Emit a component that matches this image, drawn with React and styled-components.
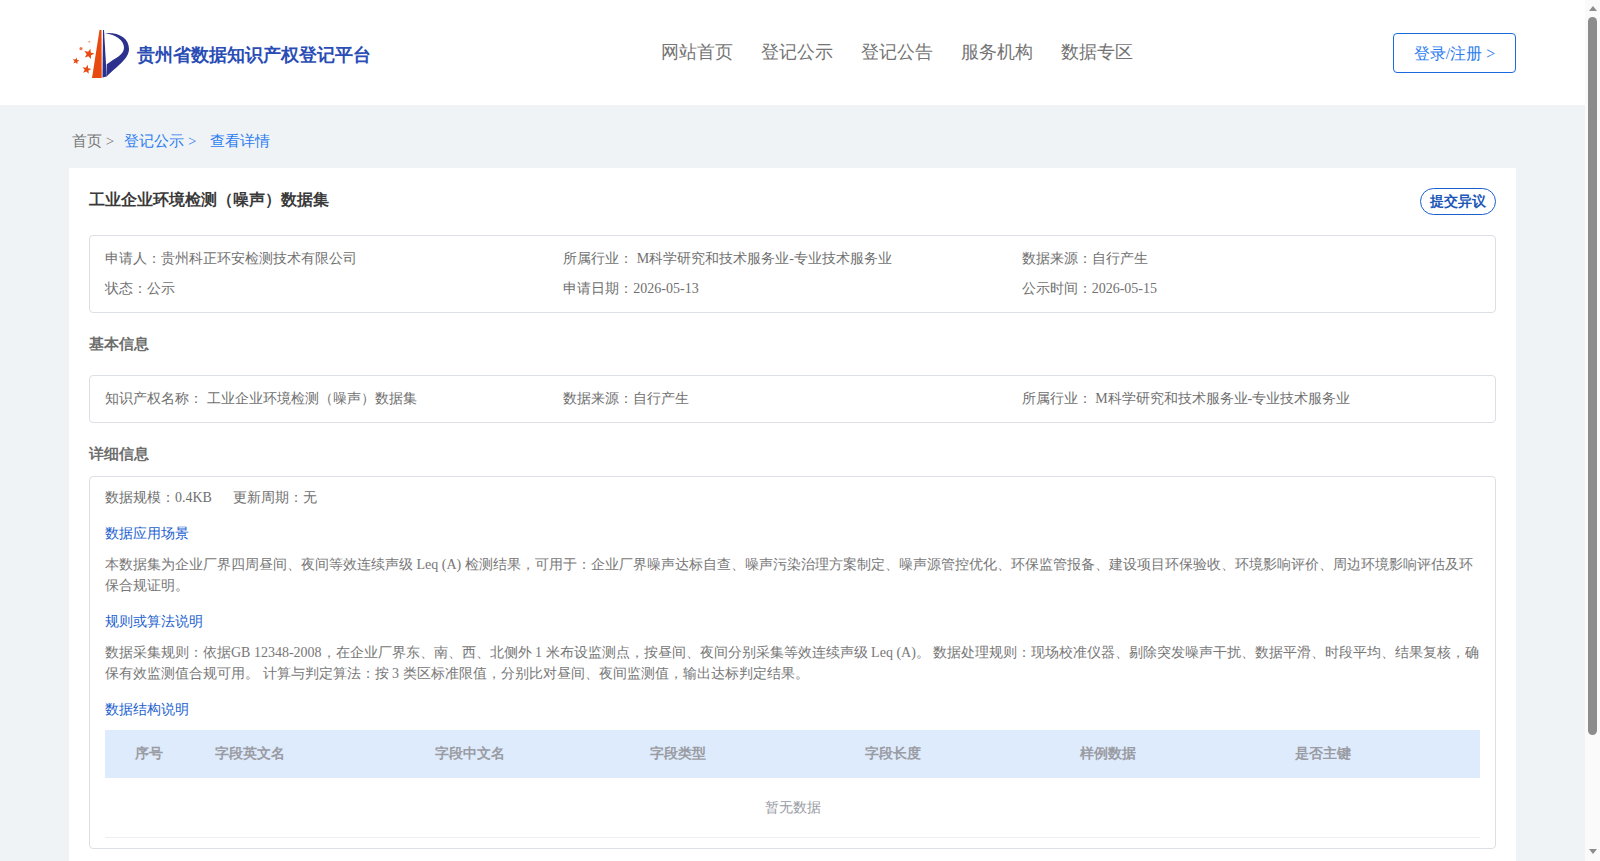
import React from "react";
import styled, { createGlobalStyle } from "styled-components";

const GlobalStyle = createGlobalStyle`
  html, body {
    margin: 0;
    padding: 0;
    background: #eff3f6;
    font-family: "Liberation Serif", serif;
  }
  body {
    padding-right: 15px;
  }
  * {
    box-sizing: border-box;
  }
`;

const Header = styled.header`
  height: 105px;
  background: #fff;
  display: flex;
  align-items: center;
  padding: 0 69px 0 70px;
`;

const Brand = styled.div`
  flex: 0 0 591px;
  display: flex;
  align-items: center;
  gap: 7px;
  padding-top: 2px;
`;

const BrandName = styled.span`
  color: #2a4db5;
  font-size: 18px;
  font-weight: 700;
  padding-top: 2px;
`;

const Nav = styled.nav`
  display: flex;
  gap: 28px;
  padding-bottom: 2px;
`;

const NavItem = styled.a`
  color: #747474;
  font-size: 18px;
`;

const LoginButton = styled.button`
  margin-left: auto;
  width: 123px;
  height: 40px;
  padding: 3px 0 0;
  background: #fff;
  border: 1px solid #1a6be0;
  border-radius: 4px;
  color: #2b7cf0;
  font-family: inherit;
  font-size: 16px;
`;

const Main = styled.main`
  padding: 0 69px;
  height: 888px;
`;

const Crumbs = styled.div`
  height: 63px;
  padding: 27px 3px 0;
  font-size: 15px;
  display: flex;
  gap: 10px;
`;

const Crumb = styled.span`
  color: ${(props) => (props.active ? "#2b7cf0" : "#777")};
  margin-right: ${(props) => props.gap || 0}px;
`;

const Card = styled.section`
  background: #fff;
  padding: 19px 20px;
  height: 825px;
`;

const TitleRow = styled.div`
  display: flex;
  justify-content: space-between;
  align-items: center;
  height: 27px;
  margin: 1px 0 20px;
`;

const Title = styled.h1`
  margin: 0 0 2px;
  font-size: 16px;
  font-weight: 700;
  color: #3a3a3a;
`;

const ObjectionButton = styled.button`
  width: 76px;
  height: 27px;
  padding: 0;
  background: #fff;
  border: 1px solid #1a5fd0;
  border-radius: 14px;
  color: #1d57b8;
  font-family: inherit;
  font-size: 14px;
  font-weight: 700;
`;

const Panel = styled.div`
  border: 1px solid #dcdfe6;
  border-radius: 4px;
  padding: ${(props) => props.pad || "8px 15px"};
  font-size: 14px;
  color: #707070;
`;

const InfoRow = styled.div`
  display: grid;
  grid-template-columns: repeat(3, 1fr);
  line-height: 30px;
  height: 30px;
`;

const SectionTitle = styled.h2`
  margin: 0;
  height: ${(props) => props.height}px;
  padding-top: 20px;
  font-size: 15px;
  line-height: 22px;
  font-weight: 700;
  color: #6e6e6e;
`;

const StatRow = styled.div`
  display: flex;
  gap: 21px;
  line-height: 21px;
`;

const SubTitle = styled.div`
  color: #1d5fd0;
  line-height: 21px;
  margin-top: 15px;
`;

const Paragraph = styled.p`
  margin: 10px 0 0;
  line-height: 21px;
  color: #777;
`;

const TableHead = styled.div`
  display: grid;
  grid-template-columns: 110px 220px repeat(4, 215px) 1fr;
  margin-top: 10px;
  height: 48px;
  align-items: center;
  background: #deebfc;
  color: #9a9ca3;
  font-weight: 700;
`;

const HeadCell = styled.div`
  padding-left: ${(props) => props.left || 0}px;
`;

const EmptyRow = styled.div`
  height: 60px;
  line-height: 60px;
  text-align: center;
  color: #9a9ca3;
  border-bottom: 1px solid #ebeef5;
`;

const Scrollbar = styled.div`
  position: fixed;
  top: 0;
  right: 0;
  bottom: 0;
  width: 15px;
  background: #fafafa;
  display: flex;
  flex-direction: column;
  align-items: center;
`;

const ScrollArrow = styled.div`
  width: 0;
  height: 0;
  margin: ${(props) => (props.down ? "auto 0 7px" : "6px 0 0")};
  border-left: 4.500px solid transparent;
  border-right: 4.500px solid transparent;
  border-top: ${(props) => (props.down ? "5px solid #8c8c8c" : "0")};
  border-bottom: ${(props) => (props.down ? "0" : "5px solid #8c8c8c")};
`;

const ScrollThumb = styled.div`
  width: 9px;
  height: 718px;
  margin-top: 6px;
  background: #8c8c8c;
  border-radius: 5px;
`;

const starPoints = (cx, cy, r, turn = 0) => {
  const points = [];
  for (let i = 0; i < 10; i++) {
    const radius = i % 2 === 0 ? r : r * 0.42;
    const angle = -Math.PI / 2 + turn + (i * Math.PI) / 5;
    points.push(`${(cx + radius * Math.cos(angle)).toFixed(2)},${(cy + radius * Math.sin(angle)).toFixed(2)}`);
  }
  return points.join(" ");
};

const Logo = () => (
  <svg width="60" height="50" viewBox="0 0 60 50">
    <polygon points="29.500,1 31.500,1 31.700,49 22,49" fill="#e8490f" />
    <polygon points="33,1 34,1 36.700,47.500 32.500,48.500" fill="#2b318c" />
    <path
      d="M35 4 C49 3 59 9 59 20 C59 30 46 38 36.700 47.500 L36.700 35.300 C45 29 54 26 54 18.700 C54 11 46 6 35 4 Z"
      fill="#2b318c"
    />
    <polygon points={starPoints(19, 25, 5.5, 0.25)} fill="#e8490f" />
    <polygon points={starPoints(6, 32, 3.6, 0.2)} fill="#e8490f" />
    <polygon points={starPoints(16.7, 40.5, 4.8, 0.2)} fill="#e8490f" />
    <circle cx="11" cy="19.700" r="1.600" fill="#ee7a4a" />
    <circle cx="19.300" cy="12.700" r="1" fill="#f0a080" />
  </svg>
);

const columns = [
  { name: "序号", left: 30 },
  { name: "字段英文名" },
  { name: "字段中文名" },
  { name: "字段类型" },
  { name: "字段长度" },
  { name: "样例数据" },
  { name: "是否主键" },
];

export default function App() {
  return (
    <>
      <GlobalStyle />
      <Header>
        <Brand>
          <Logo />
          <BrandName>贵州省数据知识产权登记平台</BrandName>
        </Brand>
        <Nav>
          <NavItem>网站首页</NavItem>
          <NavItem>登记公示</NavItem>
          <NavItem>登记公告</NavItem>
          <NavItem>服务机构</NavItem>
          <NavItem>数据专区</NavItem>
        </Nav>
        <LoginButton>登录/注册 &gt;</LoginButton>
      </Header>
      <Main>
        <Crumbs>
          <Crumb>首页 &gt;</Crumb>
          <Crumb active="true" gap="4">登记公示 &gt;</Crumb>
          <Crumb active="true">查看详情</Crumb>
        </Crumbs>
        <Card>
          <TitleRow>
            <Title>工业企业环境检测（噪声）数据集</Title>
            <ObjectionButton>提交异议</ObjectionButton>
          </TitleRow>
          <Panel>
            <InfoRow>
              <span>申请人：贵州科正环安检测技术有限公司</span>
              <span>所属行业： M科学研究和技术服务业-专业技术服务业</span>
              <span>数据来源：自行产生</span>
            </InfoRow>
            <InfoRow>
              <span>状态：公示</span>
              <span>申请日期：2026-05-13</span>
              <span>公示时间：2026-05-15</span>
            </InfoRow>
          </Panel>
          <SectionTitle height={62}>基本信息</SectionTitle>
          <Panel>
            <InfoRow>
              <span>知识产权名称： 工业企业环境检测（噪声）数据集</span>
              <span>数据来源：自行产生</span>
              <span>所属行业： M科学研究和技术服务业-专业技术服务业</span>
            </InfoRow>
          </Panel>
          <SectionTitle height={53}>详细信息</SectionTitle>
          <Panel pad="10px 15px">
            <StatRow>
              <span>数据规模：0.4KB</span>
              <span>更新周期：无</span>
            </StatRow>
            <SubTitle>数据应用场景</SubTitle>
            <Paragraph>本数据集为企业厂界四周昼间、夜间等效连续声级 Leq (A) 检测结果，可用于：企业厂界噪声达标自查、噪声污染治理方案制定、噪声源管控优化、环保监管报备、建设项目环保验收、环境影响评价、周边环境影响评估及环保合规证明。</Paragraph>
            <SubTitle>规则或算法说明</SubTitle>
            <Paragraph>数据采集规则：依据GB 12348-2008，在企业厂界东、南、西、北侧外 1 米布设监测点，按昼间、夜间分别采集等效连续声级 Leq (A)。 数据处理规则：现场校准仪器、剔除突发噪声干扰、数据平滑、时段平均、结果复核，确保有效监测值合规可用。 计算与判定算法：按 3 类区标准限值，分别比对昼间、夜间监测值，输出达标判定结果。</Paragraph>
            <SubTitle>数据结构说明</SubTitle>
            <TableHead>
              {columns.map((col) => (
                <HeadCell key={col.name} left={col.left}>{col.name}</HeadCell>
              ))}
            </TableHead>
            <EmptyRow>暂无数据</EmptyRow>
          </Panel>
        </Card>
      </Main>
      <Scrollbar>
        <ScrollArrow />
        <ScrollThumb />
        <ScrollArrow down="true" />
      </Scrollbar>
    </>
  );
}
